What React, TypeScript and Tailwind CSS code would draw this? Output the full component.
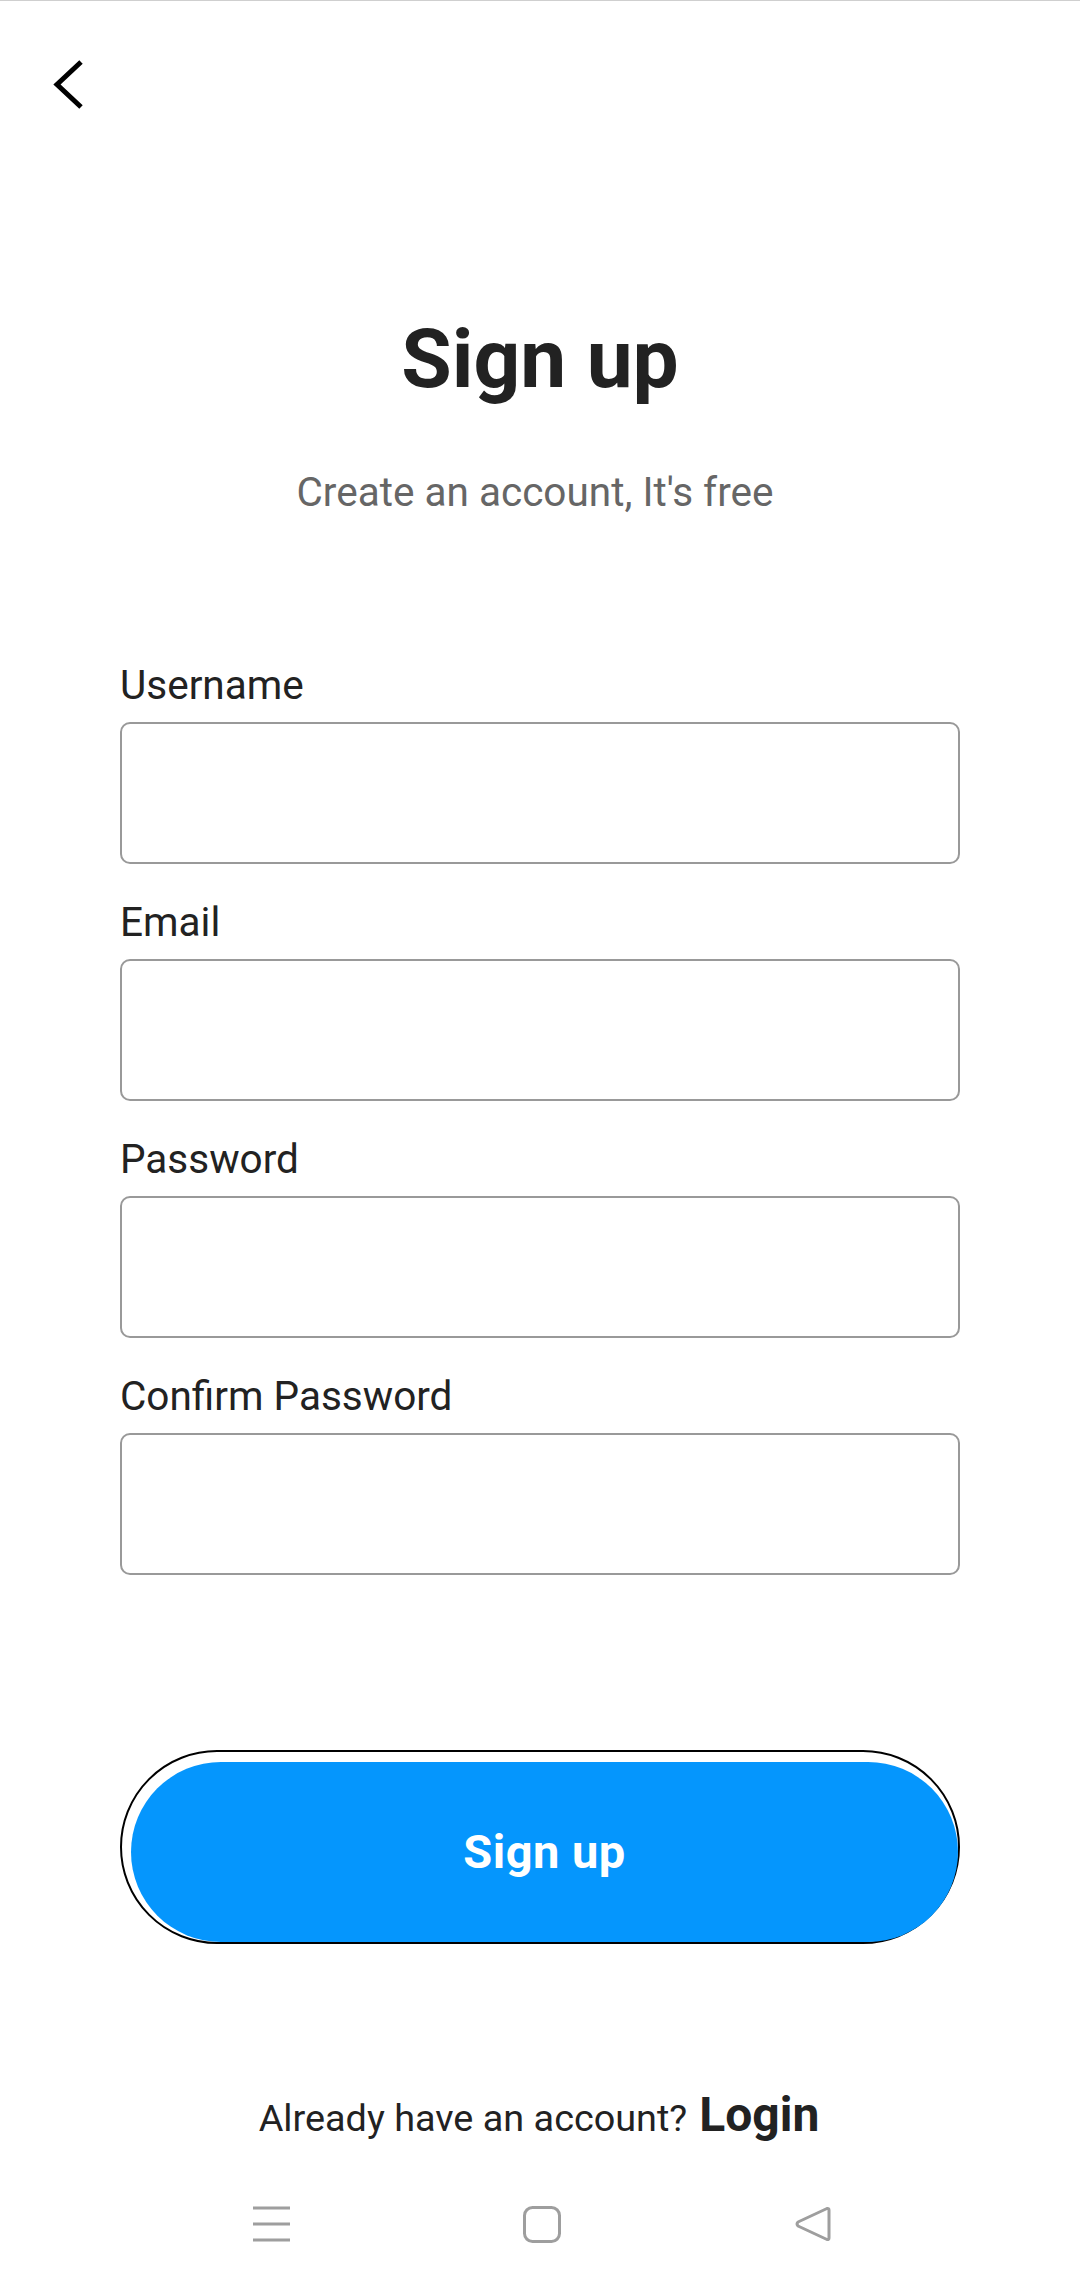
import React from "react";

function Field({ label }: { label: string }) {
  return (
    <div className="flex flex-col">
      <label className="text-[40.5px] leading-[46px] text-[#222] mb-[14px]">{label}</label>
      <div className="h-[142px] w-full rounded-[10px] border-2 border-[#999999] bg-white" />
    </div>
  );
}

export default function App() {
  return (
    <div className="w-[1080px] min-h-[2291px] bg-white flex flex-col font-['Roboto','Liberation_Sans',sans-serif]">
      <div className="h-px bg-[#cfcfcf]" />
      <div className="pl-[53px] pt-[58px]">
        <svg width="32" height="52" viewBox="0 0 32 52" fill="none">
          <polyline points="28,3 4,25.5 28,48" stroke="#000" strokeWidth="5" strokeLinejoin="miter" />
        </svg>
      </div>
      <h1 className="mt-[198px] text-center text-[82px] leading-[100px] font-bold text-[#222]">Sign up</h1>
      <p className="mt-[60px] text-center text-[40.5px] leading-[46px] text-[#666] pr-[10px]">
        Create an account, It's free
      </p>
      <div className="mt-[147px] px-[120px] flex flex-col gap-[35px]">
        <Field label="Username" />
        <Field label="Email" />
        <Field label="Password" />
        <Field label="Confirm Password" />
      </div>
      <div className="mt-[175px] px-[120px]">
        <div className="h-[194px] w-full rounded-full border-2 border-black pl-[9px] pt-[10px]">
          <button className="h-full w-full rounded-full bg-[#0596fd] flex items-center justify-center text-white text-[47px] font-bold tracking-[0.01em]">
            Sign up
          </button>
        </div>
      </div>
      <div className="mt-[143px] flex items-baseline justify-center gap-[12px] pr-[2px]">
        <span className="text-[37.8px] leading-[46px] text-[#222]">Already have an account?</span>
        <span className="text-[48px] leading-[56px] font-bold text-[#222]">Login</span>
      </div>
      <div className="flex-1 flex items-center justify-between pl-[253px] pr-[249px] pt-[14px]">
        <svg width="37" height="36" viewBox="0 0 37 36" fill="none">
          <line x1="0" y1="2" x2="37" y2="2" stroke="#9e9e9e" strokeWidth="3" />
          <line x1="0" y1="18" x2="37" y2="18" stroke="#9e9e9e" strokeWidth="3" />
          <line x1="0" y1="34" x2="37" y2="34" stroke="#9e9e9e" strokeWidth="3" />
        </svg>
        <svg width="38" height="37" viewBox="0 0 38 37" fill="none">
          <rect x="1.5" y="1.5" width="35" height="34" rx="8" stroke="#9e9e9e" strokeWidth="3" />
        </svg>
        <svg width="37" height="38" viewBox="0 0 37 38" fill="none">
          <path d="M33 3.5 L4 17 Q2 19 4 21 L33 34.5 Q35 35 35 33 L35 5 Q35 3 33 3.5 Z" stroke="#9e9e9e" strokeWidth="3" strokeLinejoin="round" />
        </svg>
      </div>
    </div>
  );
}
